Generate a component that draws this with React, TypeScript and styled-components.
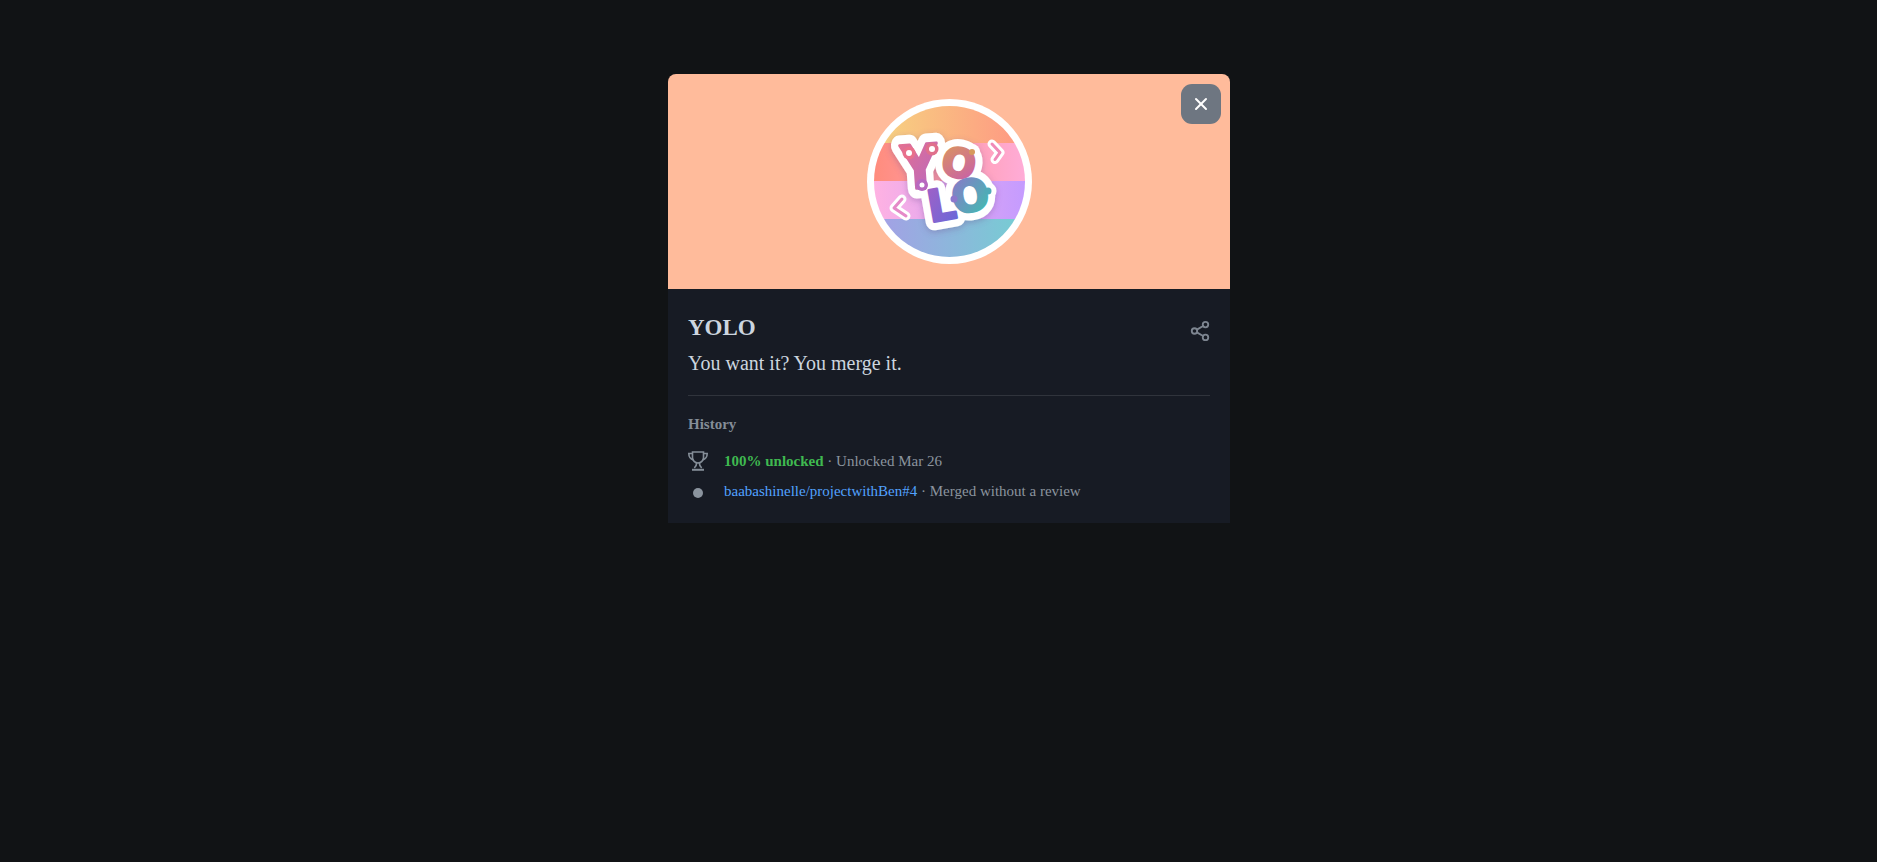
import React from "react";
import styled, { createGlobalStyle } from "styled-components";
import { Share2, X } from "lucide-react";

const GlobalStyle = createGlobalStyle`
  html, body {
    margin: 0;
    padding: 0;
    background: #111315;
    font-family: "Liberation Serif", "Times New Roman", serif;
  }
`;

const Page = styled.div`
  min-height: 862px;
  display: flex;
  justify-content: center;
  align-items: flex-start;
  padding-top: 74px;
  padding-left: 21px;
  box-sizing: border-box;
`;

const Dialog = styled.div`
  position: relative;
  width: 562px;
  background: #171b24;
  border-radius: 8px 8px 0 0;
  overflow: hidden;
`;

const CloseButton = styled.button`
  position: absolute;
  top: 10px;
  right: 9px;
  width: 40px;
  height: 40px;
  padding: 0;
  border: 0;
  border-radius: 11px;
  background: #6e7681;
  color: #fff;
  display: flex;
  align-items: center;
  justify-content: center;
`;

const Banner = styled.div`
  height: 215px;
  background: #ffbb9b;
  display: flex;
  align-items: center;
  justify-content: center;
`;

const Body = styled.div`
  padding: 26px 20px 21px;
`;

const TitleRow = styled.div`
  display: flex;
  justify-content: space-between;
  align-items: flex-start;
`;

const Title = styled.h2`
  margin: 0;
  font-size: 23px;
  line-height: 26px;
  font-weight: 700;
  color: #ccd5df;
`;

const ShareButton = styled.span`
  display: flex;
  color: #7d8590;
  margin-top: 5px;
  margin-right: -1px;
`;

const Description = styled.p`
  margin: 9px 0 0;
  font-size: 20px;
  line-height: 24px;
  color: #ccd5df;
`;

const Divider = styled.hr`
  margin: 20px 0 0;
  border: 0;
  border-top: 1px solid #30343c;
`;

const SectionLabel = styled.h3`
  margin: 19px 0 0;
  font-size: 15px;
  line-height: 18px;
  font-weight: 700;
  color: #848d97;
`;

const HistoryList = styled.ul`
  list-style: none;
  margin: 17px 0 0;
  padding: 0;
  display: flex;
  flex-direction: column;
  gap: 8px;
`;

const HistoryRow = styled.li`
  display: flex;
  align-items: center;
  height: 22px;
  font-size: 15px;
  color: #8b949e;
`;

const IconSlot = styled.span`
  width: 36px;
  flex: none;
  display: flex;
`;

const Dot = styled.span`
  width: 10px;
  height: 10px;
  border-radius: 50%;
  margin: 3px 0 0 5px;
  background: #8b949e;
`;

const Unlocked = styled.strong`
  color: #3fb950;
`;

const RepoLink = styled.a`
  color: #52a2ff;
  text-decoration: none;
`;

const bands = [
  { id: "bandA", y: 0, h: 44, from: "#f6d580", to: "#ff9683" },
  { id: "bandB", y: 44, h: 38, from: "#ff8c7c", to: "#ffacd8" },
  { id: "bandC", y: 82, h: 38, from: "#ffb2e2", to: "#c49bff" },
  { id: "bandD", y: 120, h: 45, from: "#a69ee6", to: "#74cfd2" },
];

const letters = [
  { ch: "Y", x: 54, y: 89, size: 50, sy: 1.2, rot: -4, id: "lY", from: "#e8708c", to: "#b868c0" },
  { ch: "O", x: 89, y: 78, size: 40, sy: 1, rot: 12, id: "lO", from: "#dc9a58", to: "#c860a8" },
  { ch: "L", x: 77, y: 121, size: 44, sy: 1, rot: -10, id: "lL", from: "#a860c4", to: "#6c68d8" },
  { ch: "O", x: 106, y: 112, size: 44, sy: 1, rot: -10, id: "lO2", from: "#9470cc", to: "#40bcb0" },
];

const knobs = [
  { cx: 42, cy: 54, r: 6.5, hole: 3, fill: "#e8708c" },
  { cx: 65, cy: 50, r: 6.5, hole: 3, fill: "#e0708c" },
  { cx: 55, cy: 86, r: 6, hole: 2.5, fill: "#b868c0" },
  { cx: 105, cy: 53, r: 3, hole: 0, fill: "#d69a5c" },
  { cx: 87, cy: 100, r: 3.5, hole: 0, fill: "#8c78cc" },
  { cx: 121, cy: 92, r: 3.5, hole: 0, fill: "#50aab8" },
];

const chevrons = [
  { d: "M125 45l8 8.500-5 7", color: "#f08ab8" },
  { d: "M35 100l-8 9 12 8", color: "#e58ac8" },
];

const letterTransform = (l: (typeof letters)[number]) =>
  `translate(${l.x} ${l.y}) rotate(${l.rot}) scale(1 ${l.sy})`;

// badge art, the lettering stays real text
const YoloBadge = () => (
  <svg width="165" height="165" viewBox="0 0 165 165">
    <defs>
      <clipPath id="inner">
        <circle cx="82.500" cy="82.500" r="75.500" />
      </clipPath>
      <filter id="soft" x="-20%" y="-20%" width="140%" height="140%">
        <feDropShadow dx="0" dy="2" stdDeviation="3" floodColor="#6a4a8a" floodOpacity="0.35" />
      </filter>
      {bands.map((b) => (
        <linearGradient key={b.id} id={b.id} x1="0" y1="0" x2="1" y2="0">
          <stop offset="0" stopColor={b.from} />
          <stop offset="1" stopColor={b.to} />
        </linearGradient>
      ))}
      {letters.map((l) => (
        <linearGradient key={l.id} id={l.id} x1="0" y1="0" x2="0.7" y2="1">
          <stop offset="0" stopColor={l.from} />
          <stop offset="1" stopColor={l.to} />
        </linearGradient>
      ))}
    </defs>
    <circle cx="82.500" cy="82.500" r="82.500" fill="#fff" />
    <g clipPath="url(#inner)">
      {bands.map((b) => (
        <rect key={b.id} x="6" y={b.y} width="153" height={b.h} fill={`url(#${b.id})`} />
      ))}
    </g>
    {chevrons.map((c) => (
      <g key={c.d} fill="none" strokeLinecap="round" strokeLinejoin="round">
        <path d={c.d} stroke="#fff" strokeWidth="9" />
        <path d={c.d} stroke={c.color} strokeWidth="3" />
      </g>
    ))}
    <g filter="url(#soft)">
      {letters.map((l) => (
        <text
          key={`${l.id}-back`}
          textAnchor="middle"
          transform={letterTransform(l)}
          fontFamily="'DejaVu Sans', sans-serif"
          fontWeight="700"
          fontSize={l.size}
          fill="#fff"
          stroke="#fff"
          strokeWidth="17"
          strokeLinejoin="round"
        >
          {l.ch}
        </text>
      ))}
      {knobs.map((k) => (
        <circle key={`${k.cx}-back`} cx={k.cx} cy={k.cy} r={k.r + 5} fill="#fff" />
      ))}
    </g>
    {letters.map((l) => (
      <text
        key={l.id}
        textAnchor="middle"
        transform={letterTransform(l)}
        fontFamily="'DejaVu Sans', sans-serif"
        fontWeight="700"
        fontSize={l.size}
        fill={`url(#${l.id})`}
        stroke={`url(#${l.id})`}
        strokeWidth="2.500"
        strokeLinejoin="round"
      >
        {l.ch}
      </text>
    ))}
    {knobs.map((k) => (
      <g key={k.cx}>
        <circle cx={k.cx} cy={k.cy} r={k.r} fill={k.fill} />
        {k.hole > 0 && <circle cx={k.cx} cy={k.cy} r={k.hole} fill="#fff" />}
      </g>
    ))}
  </svg>
);

const TrophyIcon = () => (
  <svg width="20" height="20" viewBox="0 0 20 20" fill="none" stroke="#848d97" strokeWidth="1.6">
    <path d="M4.500 1h11v5.500a5.500 5.500 0 0 1-11 0z" />
    <path d="M4.500 2.500H.8c0 3.400 1.400 5.500 4.800 6.400M15.500 2.500h3.700c0 3.400-1.400 5.500-4.800 6.400" />
    <path d="M8.700 11.800c0 2.400-1 3.900-2.400 5.200M11.300 11.800c0 2.400 1 3.900 2.400 5.200" />
    <path d="M4 18.800h12" strokeWidth="2" />
  </svg>
);

export default function App() {
  return (
    <>
      <GlobalStyle />
      <Page>
        <Dialog>
          <CloseButton aria-label="Close">
            <X size={20} strokeWidth={2.4} />
          </CloseButton>
          <Banner>
            <YoloBadge />
          </Banner>
          <Body>
            <TitleRow>
              <Title>YOLO</Title>
              <ShareButton>
                <Share2 size={22} strokeWidth={2} />
              </ShareButton>
            </TitleRow>
            <Description>You want it? You merge it.</Description>
            <Divider />
            <SectionLabel>History</SectionLabel>
            <HistoryList>
              <HistoryRow>
                <IconSlot>
                  <TrophyIcon />
                </IconSlot>
                <span>
                  <Unlocked>100% unlocked</Unlocked> · Unlocked Mar 26
                </span>
              </HistoryRow>
              <HistoryRow>
                <IconSlot>
                  <Dot />
                </IconSlot>
                <span>
                  <RepoLink href="#">baabashinelle/projectwithBen#4</RepoLink> · Merged without a review
                </span>
              </HistoryRow>
            </HistoryList>
          </Body>
        </Dialog>
      </Page>
    </>
  );
}
